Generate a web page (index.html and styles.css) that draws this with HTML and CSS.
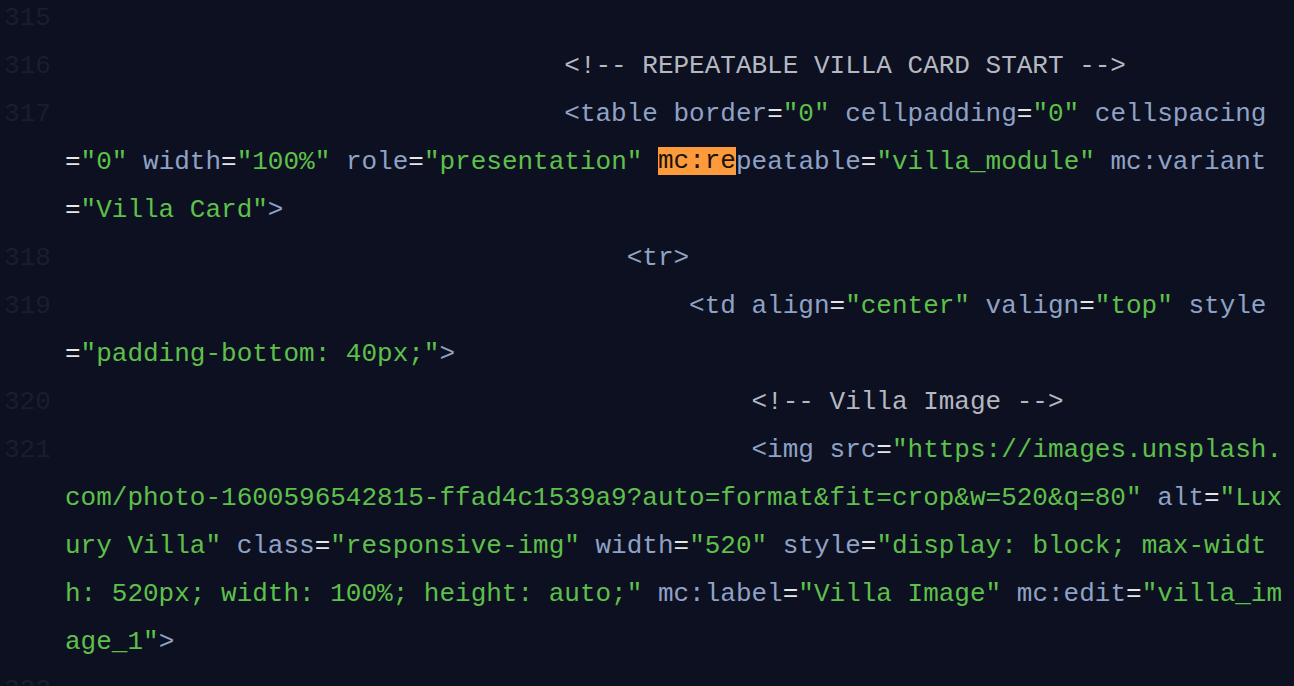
FILE: index.html
```html
<!DOCTYPE html>
<html lang="en">
<head>
<meta charset="utf-8">
<title>Editor</title>
<link rel="stylesheet" href="styles.css">
</head>
<body>
<div class="editor">
  <div class="row"><span class="ln">315</span><span class="code"></span></div>
  <div class="row"><span class="ln">316</span><span class="code">                                <span class="c">&lt;!-- REPEATABLE VILLA CARD START --&gt;</span></span></div>
  <div class="row"><span class="ln">317</span><span class="code">                                <span class="t">&lt;table border</span><span class="p">=</span><span class="s">"0"</span><span class="t"> cellpadding</span><span class="p">=</span><span class="s">"0"</span><span class="t"> cellspacing</span></span></div>
  <div class="row"><span class="ln"></span><span class="code"><span class="p">=</span><span class="s">"0"</span><span class="t"> width</span><span class="p">=</span><span class="s">"100%"</span><span class="t"> role</span><span class="p">=</span><span class="s">"presentation"</span><span class="t"> <span class="hl">mc:re</span>peatable</span><span class="p">=</span><span class="s">"villa_module"</span><span class="t"> mc:variant</span></span></div>
  <div class="row"><span class="ln"></span><span class="code"><span class="p">=</span><span class="s">"Villa Card"</span><span class="t">&gt;</span></span></div>
  <div class="row"><span class="ln">318</span><span class="code">                                    <span class="t">&lt;tr&gt;</span></span></div>
  <div class="row"><span class="ln">319</span><span class="code">                                        <span class="t">&lt;td align</span><span class="p">=</span><span class="s">"center"</span><span class="t"> valign</span><span class="p">=</span><span class="s">"top"</span><span class="t"> style</span></span></div>
  <div class="row"><span class="ln"></span><span class="code"><span class="p">=</span><span class="s">"padding-bottom: 40px;"</span><span class="t">&gt;</span></span></div>
  <div class="row"><span class="ln">320</span><span class="code">                                            <span class="c">&lt;!-- Villa Image --&gt;</span></span></div>
  <div class="row"><span class="ln">321</span><span class="code">                                            <span class="t">&lt;img src</span><span class="p">=</span><span class="s">"https://images.unsplash.</span></span></div>
  <div class="row"><span class="ln"></span><span class="code"><span class="s">com/photo-1600596542815-ffad4c1539a9?auto=format&amp;fit=crop&amp;w=520&amp;q=80"</span><span class="t"> alt</span><span class="p">=</span><span class="s">"Lux</span></span></div>
  <div class="row"><span class="ln"></span><span class="code"><span class="s">ury Villa"</span><span class="t"> class</span><span class="p">=</span><span class="s">"responsive-img"</span><span class="t"> width</span><span class="p">=</span><span class="s">"520"</span><span class="t"> style</span><span class="p">=</span><span class="s">"display: block; max-widt</span></span></div>
  <div class="row"><span class="ln"></span><span class="code"><span class="s">h: 520px; width: 100%; height: auto;"</span><span class="t"> mc:label</span><span class="p">=</span><span class="s">"Villa Image"</span><span class="t"> mc:edit</span><span class="p">=</span><span class="s">"villa_im</span></span></div>
  <div class="row"><span class="ln"></span><span class="code"><span class="s">age_1"</span><span class="t">&gt;</span></span></div>
  <div class="row"><span class="ln">322</span><span class="code"></span></div>
</div>
</body>
</html>
```

FILE: styles.css
```css
html, body {
  margin: 0;
  padding: 0;
  background: #0c1020;
  overflow: hidden;
}

.editor {
  margin-top: -6px;
  font-family: "Liberation Mono", "Courier New", monospace;
  font-size: 26px;
  line-height: 48px;
  color: #8fa2c6;
}

.row {
  display: flex;
  height: 48px;
}

.ln {
  flex: 0 0 61px;
  padding-left: 4px;
  color: #1a1e2c;
  white-space: pre;
}

.code {
  white-space: pre;
}

.t { color: #8fa2c6; }
.s { color: #5ec04b; }
.p { color: #e6e6e6; }
.c { color: #b5b8c0; }

.hl {
  background: #fd9a3c;
  color: #1b1408;
  display: inline-block;
  line-height: 28px;
  vertical-align: 1px;
}
```
